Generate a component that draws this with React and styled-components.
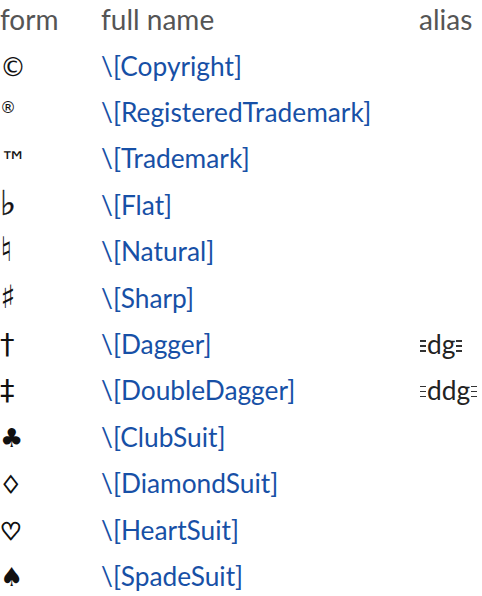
import React from "react"
import styled, { createGlobalStyle } from "styled-components"

const GlobalStyle = createGlobalStyle`
  body {
    margin: 0;
    background: #ffffff;
  }
`

const Table = styled.div`
  display: flex;
  flex-direction: column;
  font-family: "Lato", "Liberation Sans", sans-serif;
  font-size: 26px;
`

const Row = styled.div`
  display: grid;
  grid-template-columns: 101px 318px auto;
  align-items: baseline;
  height: ${({ $head }) => ($head ? 42.7 : 46.4)}px;
  line-height: ${({ $head }) => ($head ? 38.4 : 46.4)}px;
  font-size: ${({ $head }) => ($head ? 28 : 26.3)}px;
`

const Head = styled.div`
  color: #555555;
  white-space: nowrap;
`

const Form = styled.div`
  color: #111111;
  font-family: "DejaVu Sans", sans-serif;
  font-size: ${({ $size }) => $size || 24}px;
  line-height: 20px;
  -webkit-text-stroke: ${({ $stroke }) => $stroke || 0}px #111111;
`

const Glyph = styled.span`
  display: inline-block;
  transform: translateY(${({ $shift }) => $shift || 0}px);
`

const Name = styled.div`
  color: #1750a6;
  white-space: nowrap;
`

const Alias = styled.div`
  color: #222222;
  white-space: nowrap;
`

const Delim = styled.span`
  display: inline-block;
  width: 6px;
  height: 14px;
  margin: 0 1px;
  background: repeating-linear-gradient(
    to bottom,
    #333 0px,
    #333 1.5px,
    transparent 1.5px,
    transparent 5px
  );
`

const rows = [
  { form: "\u00A9", name: "Copyright", size: 26 },
  { form: "\u00AE", name: "RegisteredTrademark", size: 16, shift: -9 },
  { form: "\u2122", name: "Trademark", size: 27, shift: 3 },
  { form: "\u266D", name: "Flat", size: 34, stroke: 0.4 },
  { form: "\u266E", name: "Natural", size: 34 },
  { form: "\u266F", name: "Sharp", size: 32 },
  { form: "\u2020", name: "Dagger", alias: "dg", size: 29 },
  { form: "\u2021", name: "DoubleDagger", alias: "ddg", size: 29 },
  { form: "\u2663", name: "ClubSuit", size: 26 },
  { form: "\u2662", name: "DiamondSuit", size: 24, stroke: 1.2 },
  { form: "\u2661", name: "HeartSuit", size: 24, stroke: 1.2 },
  { form: "\u2660", name: "SpadeSuit", size: 26 },
]

const App = () => {
  return (
    <>
      <GlobalStyle />
      <Table>
        <Row $head>
          <Head>form</Head>
          <Head>full name</Head>
          <Head>alias</Head>
        </Row>
        {rows.map((r) => (
          <Row key={r.name}>
            <Form $size={r.size} $stroke={r.stroke}>
              <Glyph $shift={r.shift}>{r.form}</Glyph>
            </Form>
            <Name>\[{r.name}]</Name>
            <Alias>
              {r.alias && (
                <>
                  <Delim />
                  {r.alias}
                  <Delim />
                </>
              )}
            </Alias>
          </Row>
        ))}
      </Table>
    </>
  )
}

export default App
